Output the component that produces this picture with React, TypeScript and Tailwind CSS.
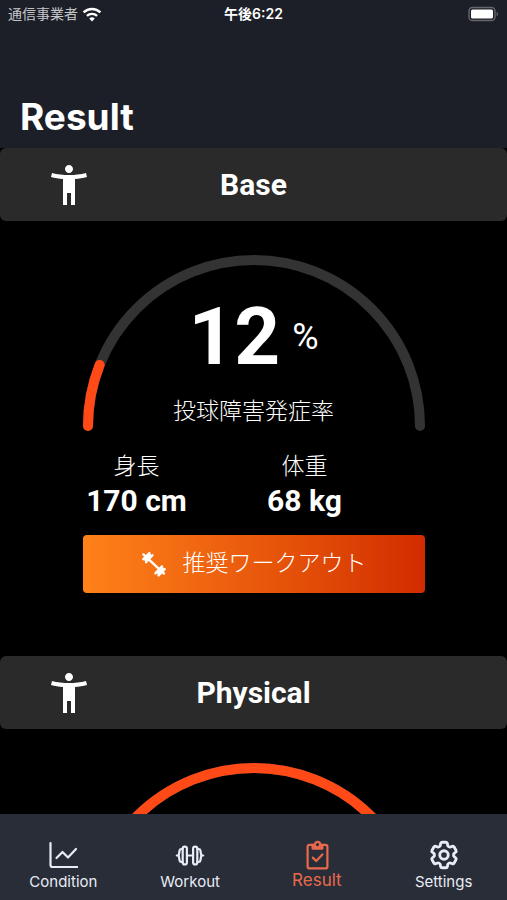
import type { ReactNode } from "react";
import { MdAccessibilityNew } from "react-icons/md";
import { HiOutlineCog6Tooth } from "react-icons/hi2";

const ARC = "M5 171a166 166 0 0 1 332 0";

function WifiIcon() {
  return (
    <svg viewBox="0 0 20 15" className="h-[15px] w-5" fill="none" stroke="#fff" aria-hidden="true">
      <path d="M1.6 5.4a12 12 0 0 1 16.8 0" strokeWidth="2.6" />
      <path d="M4.9 8.9a7.4 7.4 0 0 1 10.2 0" strokeWidth="2.4" />
      <path d="M10 14.4 7.2 11.5a4 4 0 0 1 5.6 0z" fill="#fff" stroke="none" />
    </svg>
  );
}

function BatteryIcon() {
  return (
    <svg viewBox="0 0 31 16" className="h-4 w-[31px]" aria-hidden="true">
      <rect x="1" y="1.5" width="26" height="13" rx="3.6" fill="none" stroke="#65676d" strokeWidth="1.4" />
      <rect x="3" y="3.5" width="22" height="9" rx="1.6" fill="#fff" />
      <path d="M28.6 5.6c1.8.7 1.8 4.1 0 4.8z" fill="#65676d" />
    </svg>
  );
}

function DumbbellIcon() {
  return (
    <svg viewBox="0 0 26 26" className="size-[26px]" fill="none" stroke="#fff" strokeLinecap="round" aria-hidden="true">
      <path d="m2.4 3.4 20.6 19.2" strokeWidth="2.4" />
      <path d="m5 11.2 6.4-7M14.4 22.4l6.6-7" strokeWidth="2.4" />
      <path d="m2.4 8.2 6-6.2M17.6 24.4l6-6.2" strokeWidth="2.4" />
      <path d="m4.6 8.6 4.2-4.2M17.4 21.8l4-4.2" strokeWidth="3" />
    </svg>
  );
}

function ChartIcon() {
  return (
    <svg viewBox="0 0 30 30" className="size-[30px]" fill="none" stroke="currentColor" strokeWidth="2.2" strokeLinecap="round" strokeLinejoin="round" aria-hidden="true">
      <path d="M2.5 3v22a2 2 0 0 0 2 2H29.5" />
      <path d="m8.5 18 6-6 5.5 5.5L28 9" />
    </svg>
  );
}

function BarbellIcon() {
  return (
    <svg viewBox="0 0 30 30" className="size-[30px]" fill="none" stroke="currentColor" strokeWidth="2.2" strokeLinecap="round" strokeLinejoin="round" aria-hidden="true">
      <path d="M11.9 15.5h6.2M1.8 15.5h1M27.2 15.5h1" />
      <rect x="7.7" y="6.6" width="4.2" height="17.8" rx="2" />
      <rect x="18.1" y="6.6" width="4.2" height="17.8" rx="2" />
      <path d="M7.7 9H6.4a1.8 1.8 0 0 0-1.8 1.5l-.9 5 .9 5A1.8 1.8 0 0 0 6.4 22h1.3" />
      <path d="M22.3 9h1.3a1.8 1.8 0 0 1 1.8 1.5l.9 5-.9 5a1.8 1.8 0 0 1-1.8 1.5h-1.3" />
    </svg>
  );
}

function ClipboardIcon() {
  return (
    <svg viewBox="0 0 30 30" className="size-[30px]" fill="none" stroke="currentColor" strokeWidth="2.2" strokeLinecap="round" strokeLinejoin="round" aria-hidden="true">
      <rect x="5.6" y="4.8" width="19.8" height="23.6" rx="2" />
      <path d="M10.6 4.8v3.8h9.8V4.8" fill="currentColor" />
      <circle cx="15.5" cy="4.6" r="2.7" fill="#282d38" />
      <path d="m10.8 17.6 3.4 3.4 6.2-6.6" />
    </svg>
  );
}

function SectionHeader({ title }: { title: string }) {
  return (
    <div className="grid h-[73px] grid-cols-[138px_1fr_138px] items-center rounded-md bg-[#2a2a2a]">
      <MdAccessibilityNew className="size-12 justify-self-center" aria-hidden="true" />
      <h2 className="text-center text-[30px] leading-9 font-bold">{title}</h2>
    </div>
  );
}

function Gauge({ value, children }: { value: number; children?: ReactNode }) {
  return (
    <div className="relative">
      <svg viewBox="0 0 342 177" className="block w-full" fill="none" strokeWidth="10" strokeLinecap="round" aria-hidden="true">
        <path d={ARC} stroke="#333333" />
        <path d={ARC} stroke="#ff4a17" pathLength={100} strokeDasharray={`${value} 200`} />
      </svg>
      <div className="absolute inset-x-0 bottom-0 flex flex-col items-center">{children}</div>
    </div>
  );
}

function Stat({ label, value }: { label: string; value: string }) {
  return (
    <div className="w-[108px] text-center">
      <dt className="text-[23px] leading-8 font-light">{label}</dt>
      <dd className="text-[30px] leading-9 font-bold">{value}</dd>
    </div>
  );
}

const tabs = [
  { label: "Condition", icon: <ChartIcon /> },
  { label: "Workout", icon: <BarbellIcon /> },
  { label: "Result", icon: <ClipboardIcon />, active: true },
  { label: "Settings", icon: <HiOutlineCog6Tooth className="-m-0.5 size-[34px]" strokeWidth={2} aria-hidden="true" /> },
];

export default function App() {
  return (
    <div className="flex h-screen flex-col bg-black font-[Roboto,'Noto_Sans_CJK_JP',sans-serif] text-white">
      <header className="flex h-[148px] shrink-0 flex-col justify-between bg-[#1c1f27] pb-2 font-[Inter,'Noto_Sans_CJK_JP',sans-serif]">
        <div className="grid grid-cols-3 items-center px-2 pt-1 text-sm leading-5">
          <div className="flex items-center gap-1 text-[#c4c6ca]">
            通信事業者
            <WifiIcon />
          </div>
          <div className="text-center font-semibold">午後6:22</div>
          <div className="flex justify-end">
            <BatteryIcon />
          </div>
        </div>
        <h1 className="px-5 text-[37px] leading-[46px] font-bold">Result</h1>
      </header>

      <main className="min-h-0 flex-1 overflow-hidden">
        <section>
          <SectionHeader title="Base" />
          <div className="mx-auto w-[342px] pt-[34px] pb-[63px]">
            <Gauge value={12}>
              <div className="flex items-center gap-3">
                <span className="text-[80px] leading-[94px] font-bold">12</span>
                <span className="text-4xl leading-[44px]">%</span>
              </div>
              <p className="pt-3 pb-1 text-[23px] leading-8 font-light">投球障害発症率</p>
            </Gauge>
            <dl className="flex gap-[60px] pt-[19px] pb-4">
              <Stat label="身長" value="170 cm" />
              <Stat label="体重" value="68 kg" />
            </dl>
            <button
              type="button"
              className="flex h-[58px] w-full items-center justify-center gap-4 rounded bg-linear-to-r from-[#ff8119] to-[#d22a00] text-[23px] leading-8 font-light"
            >
              <DumbbellIcon />
              推奨ワークアウト
            </button>
          </div>
        </section>

        <section>
          <SectionHeader title="Physical" />
          <div className="mx-auto w-[342px] pt-[34px]">
            <Gauge value={100} />
          </div>
        </section>
      </main>

      <nav className="grid h-[86px] shrink-0 grid-cols-4 bg-[#282d38] font-[Inter,sans-serif]">
        {tabs.map((tab) => (
          <button
            key={tab.label}
            type="button"
            className={
              tab.active
                ? "flex flex-col items-center pt-[26px] text-[17px] leading-5 text-[#e8694c]"
                : "flex flex-col items-center pt-[26px] text-[15px] leading-6 text-[#e8ecf4]"
            }
          >
            {tab.icon}
            {tab.label}
          </button>
        ))}
      </nav>
    </div>
  );
}
